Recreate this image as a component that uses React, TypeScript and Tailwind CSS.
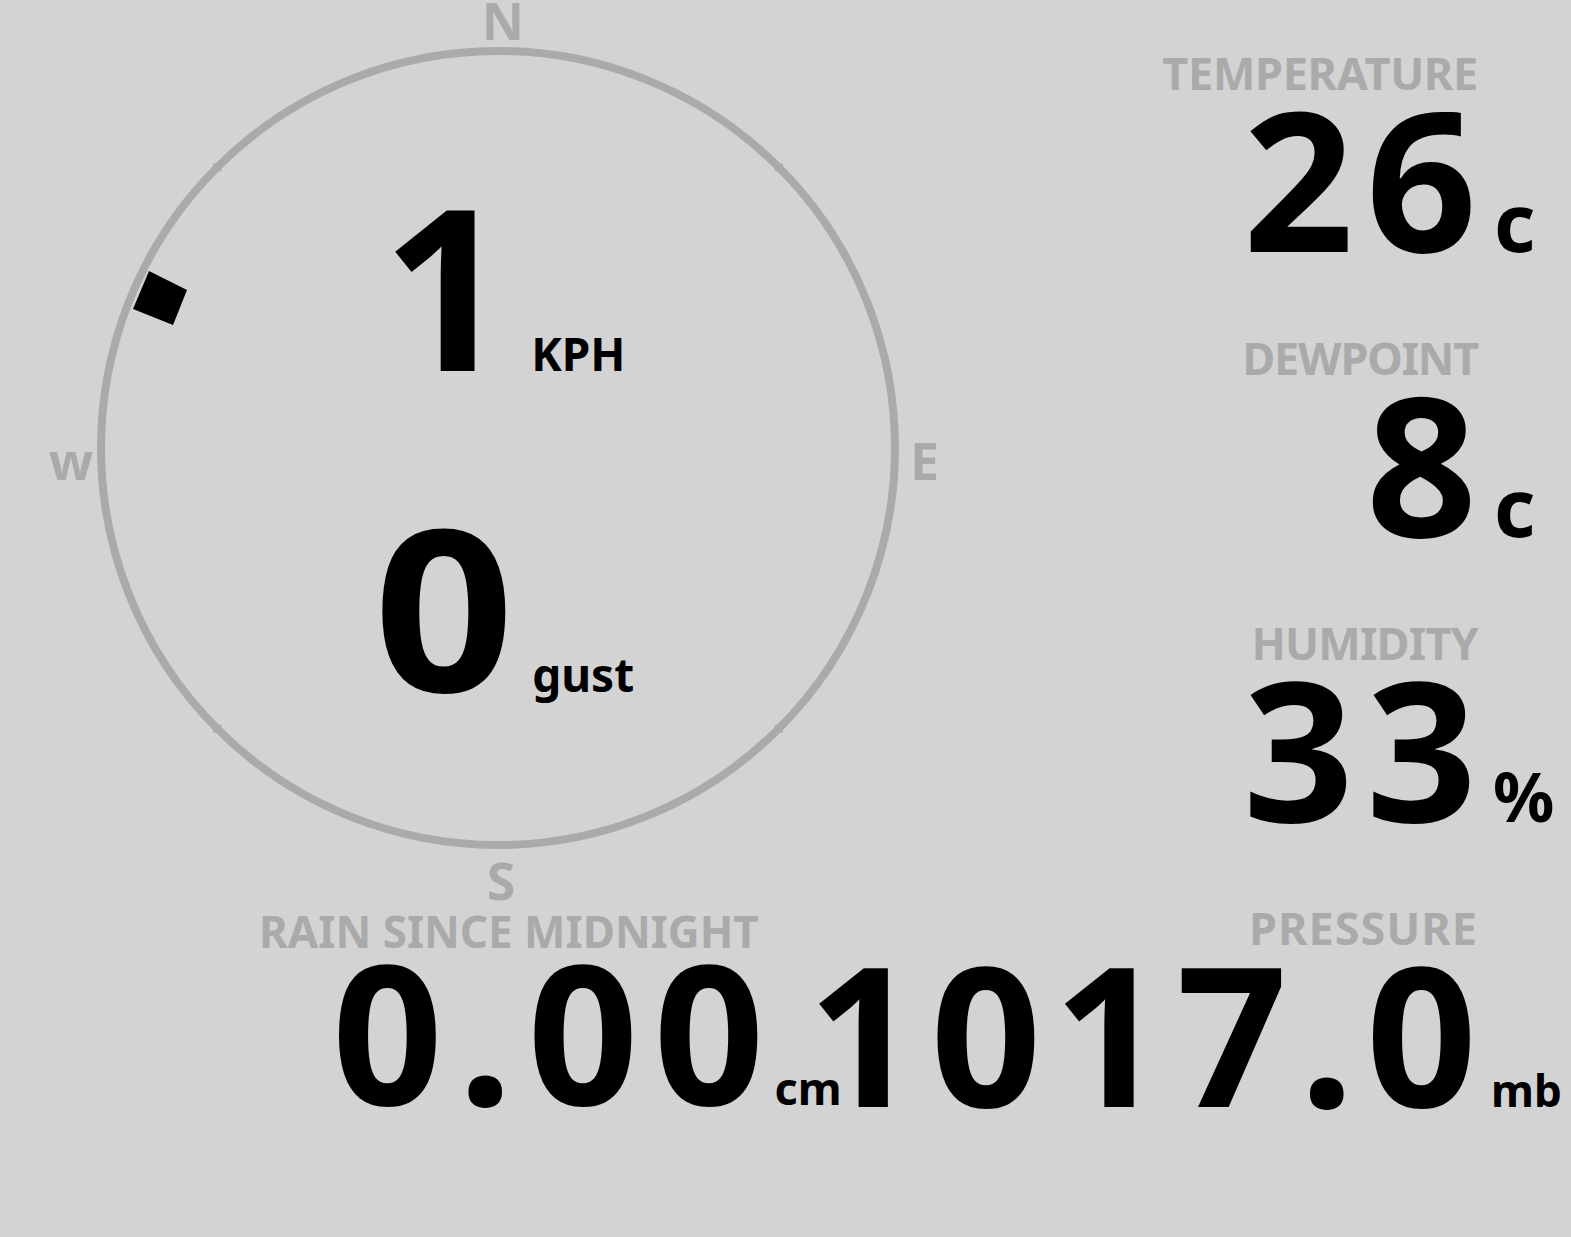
import React from "react";

const GRAY = "text-[#aaaaaa]";

function Stat({
  label,
  labelClass,
  value,
  unit,
  unitClass,
}: {
  label: string;
  labelClass: string;
  value: string;
  unit: string;
  unitClass: string;
}) {
  return (
    <div className="h-[285px] flex flex-col items-end">
      <div className={`whitespace-nowrap text-[45px] leading-[45px] ${GRAY} ${labelClass}`}>{label}</div>
      <div className="mt-[2px] flex items-baseline justify-end self-stretch">
        <span className="whitespace-nowrap text-[194px] leading-[160px] tracking-[12px]">{value}</span>
        <span className={`w-[82px] shrink-0 whitespace-nowrap ${unitClass}`}>{unit}</span>
      </div>
    </div>
  );
}

export default function App() {
  const cx = 498;
  const cy = 448;
  const r = 397;
  const ticks = [45, 135, 225, 315].map((a) => {
    const t = (a * Math.PI) / 180;
    return {
      x1: cx + (r - 5) * Math.sin(t),
      y1: cy - (r - 5) * Math.cos(t),
      x2: cx + (r + 5) * Math.sin(t),
      y2: cy - (r + 5) * Math.cos(t),
    };
  });
  return (
    <div className="w-[1571px] h-[1237px] bg-[#d3d3d3] font-['Noto_Sans',sans-serif] font-bold text-black overflow-hidden flex">
      <div className="w-[1000px] shrink-0 flex flex-col">
        <div className="relative h-[905px]">
          <svg className="absolute inset-0" width="1000" height="905" viewBox="0 0 1000 905">
            <circle cx={cx} cy={cy} r={r} fill="none" stroke="#aaaaaa" strokeWidth="8" />
            {ticks.map((t, i) => (
              <line key={i} x1={t.x1} y1={t.y1} x2={t.x2} y2={t.y2} stroke="#aaaaaa" strokeWidth="3" />
            ))}
            <polygon points="149,271 187,290 173,325 133,309" fill="#000000" />
          </svg>
          <span className={`absolute left-[503px] top-0 -translate-x-1/2 text-[52px] leading-[40px] ${GRAY}`}>N</span>
          <span className={`absolute left-[910px] top-[440px] text-[52px] leading-[40px] ${GRAY}`}>E</span>
          <span className={`absolute left-[71px] top-[440px] -translate-x-1/2 text-[52px] leading-[40px] ${GRAY}`}>w</span>
          <span className={`absolute left-[501px] top-[860px] -translate-x-1/2 text-[52px] leading-[40px] ${GRAY}`}>S</span>
          <div className="absolute left-0 top-[173px] flex flex-col gap-[97px]">
            <div className="flex items-baseline pl-[382px]">
              <span className="text-[224px] leading-[224px]">1</span>
              <span className="ml-[21px] text-[46px] leading-[46px]">KPH</span>
            </div>
            <div className="flex items-baseline pl-[380px]">
              <span className="text-[224px] leading-[224px] scale-x-[1.1]">0</span>
              <span className="ml-[24px] text-[46px] leading-[46px]">gust</span>
            </div>
          </div>
        </div>
        <div className="flex flex-col pt-[4px]">
          <div className={`pl-[259px] whitespace-nowrap text-[44px] leading-[45px] ${GRAY}`}>RAIN SINCE MIDNIGHT</div>
          <div className="-mt-[4px] flex items-baseline pl-[332px]">
            <span className="whitespace-nowrap text-[194px] leading-[160px] tracking-[15px]">0.00</span>
            <span className="-ml-[5px] whitespace-nowrap text-[45px] leading-[45px]">cm</span>
          </div>
        </div>
      </div>
      <div className="flex-1 min-w-0 flex flex-col pt-[50px]">
        <Stat label="TEMPERATURE" labelClass="mr-[93px] tracking-[-0.3px]" value="26" unit="c" unitClass="pl-[5px] text-[80px] leading-[80px]" />
        <Stat label="DEWPOINT" labelClass="mr-[93px] tracking-[-1.2px]" value="8" unit="c" unitClass="pl-[5px] text-[80px] leading-[80px]" />
        <Stat label="HUMIDITY" labelClass="mr-[93px] tracking-[-0.8px]" value="33" unit="%" unitClass="pl-[4px] text-[68px] leading-[68px]" />
        <Stat label="PRESSURE" labelClass="mr-[93px] tracking-[1px]" value="1017.0" unit="mb" unitClass="pl-[2px] text-[44px] leading-[44px]" />
      </div>
    </div>
  );
}
